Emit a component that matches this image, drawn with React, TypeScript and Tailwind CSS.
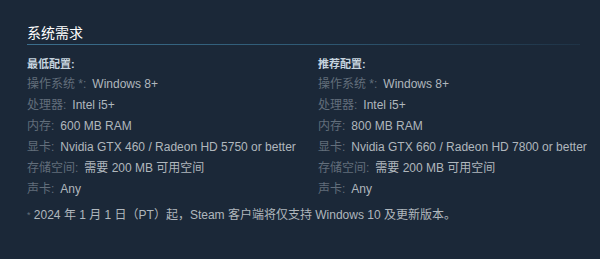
const font = { fontFamily: '"Liberation Sans", Arial, "Noto Sans CJK SC", sans-serif' };

const min = [
  ["操作系统 *:", "Windows 8+"],
  ["处理器:", "Intel i5+"],
  ["内存:", "600 MB RAM"],
  ["显卡:", "Nvidia GTX 460 / Radeon HD 5750 or better"],
  ["存储空间:", "需要 200 MB 可用空间"],
  ["声卡:", "Any"],
];

const rec = [
  ["操作系统 *:", "Windows 8+"],
  ["处理器:", "Intel i5+"],
  ["内存:", "800 MB RAM"],
  ["显卡:", "Nvidia GTX 660 / Radeon HD 7800 or better"],
  ["存储空间:", "需要 200 MB 可用空间"],
  ["声卡:", "Any"],
];

function Column({ title, rows }: { title: string; rows: string[][] }) {
  return (
    <div>
      <div className="text-[11px] font-bold leading-[14px] text-[#c6d4df]">{title}</div>
      <ul className="mt-[3px]">
        {rows.map(([k, v]) => (
          <li key={k} className="text-[12px] leading-[21px] whitespace-nowrap">
            <span className="text-[#626e7b] mr-[6px]">{k}</span>
            <span className="text-[#b0b7bd]">{v}</span>
          </li>
        ))}
      </ul>
    </div>
  );
}

export default function App() {
  return (
    <div className="w-[600px] h-[259px] bg-[#1b2838] overflow-hidden" style={font}>
      <div className="pl-[27px] pr-[20px] pt-[23px]">
        <h2 className="text-[14px] leading-[20px] text-[#ffffff] pb-[1px]">系统需求</h2>
        <div className="h-px bg-gradient-to-r from-[#3b6e8c] via-[#2f5a75] to-[#1f3346]" />
        <div className="grid grid-cols-[291px_1fr] mt-[12px]">
          <Column title="最低配置:" rows={min} />
          <Column title="推荐配置:" rows={rec} />
        </div>
        <p className="text-[12px] leading-[20px] mt-[5px] text-[#b0b7bd]">
          <span className="text-[#626e7b] text-[9px] align-top">*</span> 2024 年 1 月 1 日（PT）起，Steam 客户端将仅支持 Windows 10 及更新版本。
        </p>
      </div>
    </div>
  );
}
